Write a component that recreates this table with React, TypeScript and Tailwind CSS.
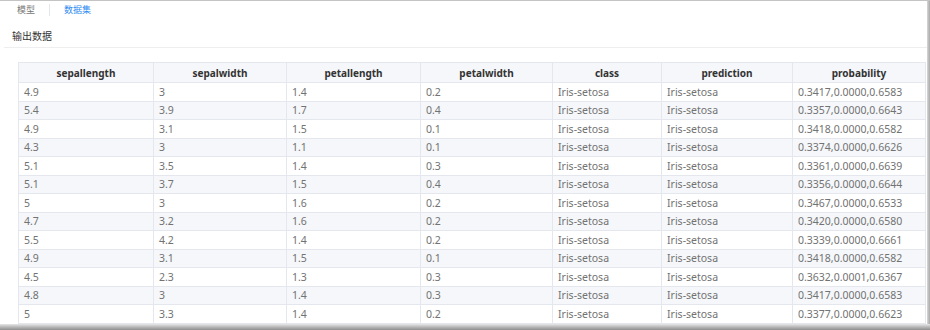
import React from 'react';

const columns = ['sepallength', 'sepalwidth', 'petallength', 'petalwidth', 'class', 'prediction', 'probability'];
const widths = ['w-[135px]', 'w-[133px]', 'w-[134px]', 'w-[132px]', 'w-[109px]', 'w-[131px]', 'w-[133px]'];

const rows = [
  ['4.9', '3', '1.4', '0.2', '0.3417,0.0000,0.6583'],
  ['5.4', '3.9', '1.7', '0.4', '0.3357,0.0000,0.6643'],
  ['4.9', '3.1', '1.5', '0.1', '0.3418,0.0000,0.6582'],
  ['4.3', '3', '1.1', '0.1', '0.3374,0.0000,0.6626'],
  ['5.1', '3.5', '1.4', '0.3', '0.3361,0.0000,0.6639'],
  ['5.1', '3.7', '1.5', '0.4', '0.3356,0.0000,0.6644'],
  ['5', '3', '1.6', '0.2', '0.3467,0.0000,0.6533'],
  ['4.7', '3.2', '1.6', '0.2', '0.3420,0.0000,0.6580'],
  ['5.5', '4.2', '1.4', '0.2', '0.3339,0.0000,0.6661'],
  ['4.9', '3.1', '1.5', '0.1', '0.3418,0.0000,0.6582'],
  ['4.5', '2.3', '1.3', '0.3', '0.3632,0.0001,0.6367'],
  ['4.8', '3', '1.4', '0.3', '0.3417,0.0000,0.6583'],
  ['5', '3.3', '1.4', '0.2', '0.3377,0.0000,0.6623'],
];

export default function App() {
  return (
    <div
      className="w-[930px] h-[330px] overflow-hidden flex flex-col bg-white"
      style={{ fontFamily: '"Noto Sans", "Noto Sans CJK SC", sans-serif' }}
    >
      <div className="h-px bg-[#c4c4c4] shrink-0" />
      <div className="flex flex-1 min-h-0">
        <div className="w-[927px] flex flex-col overflow-hidden">
          {/* tabs */}
          <div className="flex items-center h-[17px] pl-[17px] text-[9px] leading-none">
            <span className="text-[#777]">模型</span>
            <span className="w-px h-[12px] bg-[#e3e6eb] mx-[14px]" />
            <span className="text-[#2d8cf0]">数据集</span>
          </div>
          {/* title */}
          <div className="h-[29px] flex items-center pl-[12px] pt-[6px]">
            <span className="text-[10px] text-[#333] leading-none">输出数据</span>
          </div>
          <div className="h-px bg-[#eeeeee] ml-[4px]" />
          <div className="pt-[14px] pl-[18px]">
            <table className="border-collapse table-fixed leading-none">
              <thead>
                <tr className="h-[20px] bg-[#f5f7fa] text-[10px]">
                  {columns.map((c, i) => (
                    <th
                      key={c}
                      className={`${widths[i]} border border-[#e4e8ee] font-bold text-[#333] text-center px-[6px]`}
                    >
                      {c}
                    </th>
                  ))}
                </tr>
              </thead>
              <tbody className="text-[10.5px]">
                {rows.map((r, idx) => {
                  const cells = [r[0], r[1], r[2], r[3], 'Iris-setosa', 'Iris-setosa', r[4]];
                  return (
                    <tr key={idx} className={`h-[18.5px] ${idx % 2 === 1 ? 'bg-[#f5f7fa]' : 'bg-white'}`}>
                      {cells.map((v, j) => (
                        <td key={j} className="border border-[#e4e8ee] text-[#727272] px-[5px] text-left">
                          {v}
                        </td>
                      ))}
                    </tr>
                  );
                })}
              </tbody>
            </table>
          </div>
        </div>
        <div className="flex-1 bg-gradient-to-r from-[#d8d8d8] to-[#a8a8a8]" />
      </div>
      <div className="h-[6px] shrink-0 bg-gradient-to-b from-[#e6e6e6] via-[#b8b8b8] to-[#8e8e8e]" />
    </div>
  );
}
